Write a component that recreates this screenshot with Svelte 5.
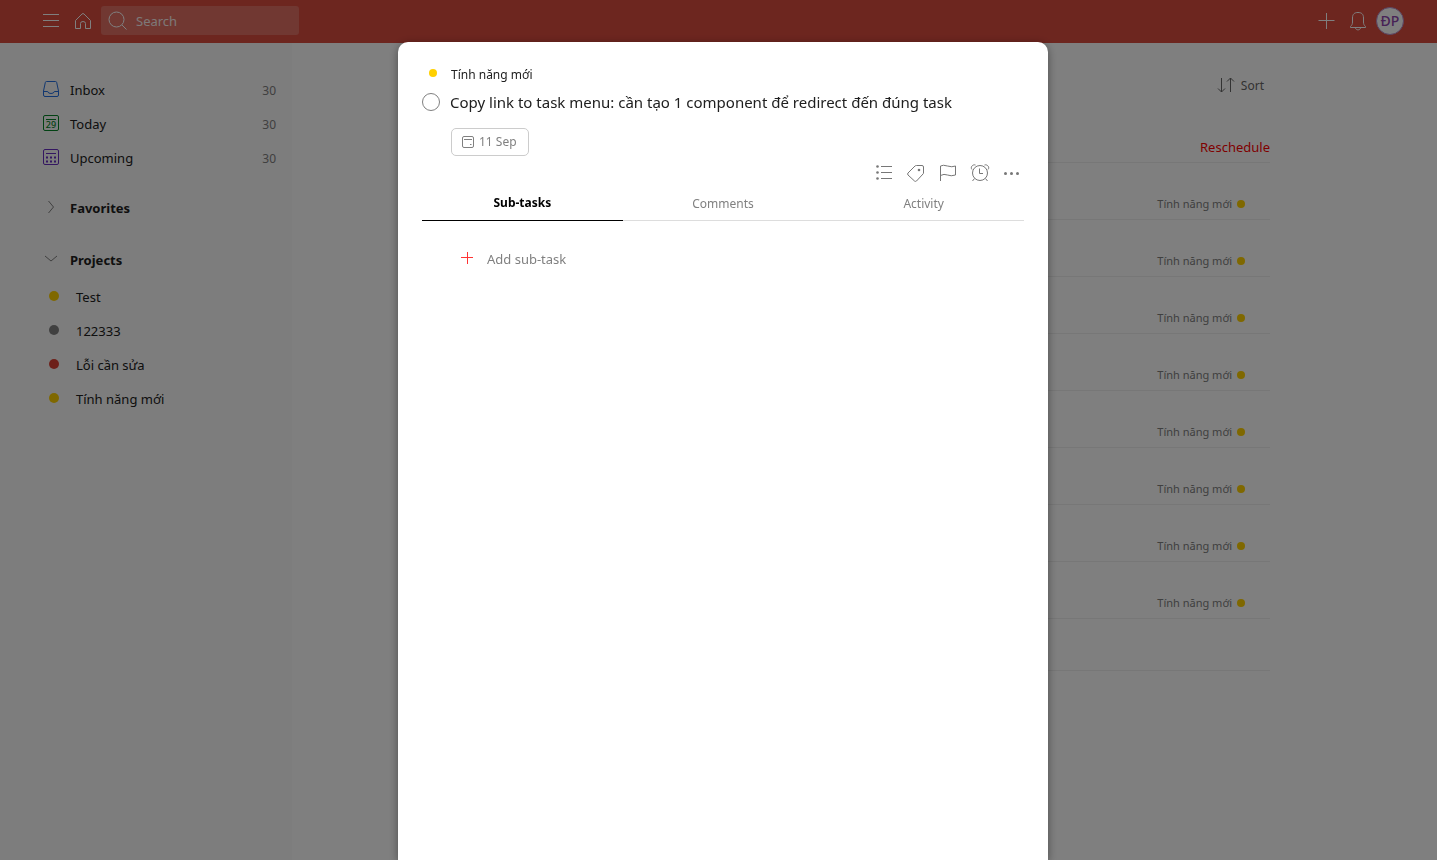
<script>
  const views = [
    { id: 'inbox', label: 'Inbox', count: 30 },
    { id: 'today', label: 'Today', count: 30 },
    { id: 'upcoming', label: 'Upcoming', count: 30 }
  ];

  const projects = [
    { name: 'Test', color: '#ffd000' },
    { name: '122333', color: '#808080' },
    { name: 'Lỗi cần sửa', color: '#db4035' },
    { name: 'Tính năng mới', color: '#ffd000' }
  ];

  const rows = Array.from({ length: 8 }, () => projects[3]);
  const tabs = ['Sub-tasks', 'Comments', 'Activity'];
  let active = $state('Sub-tasks');
</script>

<div class="app">
  <header>
    <button class="icon" aria-label="Menu">
      <svg width="16" height="16" viewBox="0 0 16 16"><path d="M0 1.500h16M0 7.500h16M0 13.500h16" /></svg>
    </button>
    <button class="icon" aria-label="Home">
      <svg width="16" height="18" viewBox="0 0 16 18"><path d="M.5 8.500 7 2q1-1 2 0l6.500 6.500v8h-5v-5q0-2-2.500-2t-2.500 2v5h-5z" /></svg>
    </button>
    <label class="search">
      <svg width="20" height="20" viewBox="0 0 20 20"><circle cx="8.500" cy="8.500" r="7.500" /><path d="m14 14 4.500 4.500" /></svg>
      <input type="text" placeholder="Search" aria-label="Search" />
    </label>
    <div class="tools">
      <button class="icon" aria-label="Add task">
        <svg width="16" height="16" viewBox="0 0 16 16"><path d="M8.500 0v16M0.500 7.500h16" /></svg>
      </button>
      <button class="icon" aria-label="Notifications">
        <svg width="16" height="20" viewBox="0 0 16 20"><path d="M.5 16.500v-1C2 14 2.500 13 2.500 11V7C2.500 3 4.500 1.500 8 1.500S13.500 3 13.500 7v4c0 2 .5 3 2 4.500v1z" /><path d="M5.500 17c.5 2.500 4.500 2.500 5 0" /></svg>
      </button>
      <button class="avatar">ĐP</button>
    </div>
  </header>

  <div class="body">
    <nav>
      <ul class="views">
        {#each views as view}
          <li>
            <a href="#{view.id}" class={view.id}>
              <svg width="16" height="18" viewBox="0 0 16 18">
                {#if view.id === 'inbox'}
                  <path d="M3.500.5h9q1 0 1.200 1l1.800 8.500v4q0 1.500-1.500 1.500H2Q.5 15.500.5 14v-4l1.800-8.500q.2-1 1.200-1z" />
                  <path d="M.5 10.500h4.200q.3 2 3.300 2t3.300-2h4.200" />
                {:else}
                  <rect x=".5" y=".5" width="15" height="15" rx="1.500" />
                  <path d="M3 4.500h10" />
                  {#if view.id === 'today'}
                    <text x="8" y="13" text-anchor="middle">29</text>
                  {:else}
                    <path class="dots" d="M3 8.500h10M3 12.500h10" />
                  {/if}
                {/if}
              </svg>
              <span>{view.label}</span>
              <small>{view.count}</small>
            </a>
          </li>
        {/each}
      </ul>

      <button class="group favorites">
        <svg width="16" height="16" viewBox="0 0 16 16"><path d="m5.500 1 5 6-5 6" /></svg>
        Favorites
      </button>
      <button class="group">
        <svg width="16" height="16" viewBox="0 0 16 16"><path d="m2 4 6 5 6-5" /></svg>
        Projects
      </button>
      <ul class="projects">
        {#each projects as project}
          <li>
            <a href="#project">
              <i class="dot" style:background={project.color}></i>
              {project.name}
            </a>
          </li>
        {/each}
      </ul>
    </nav>

    <main>
      <div class="list">
        <div class="sortbar">
          <button class="sort">
            <svg width="18" height="16" viewBox="0 0 18 16"><path d="M4.500 0v14M1 10.500 4.500 14 8 10.500M13.500 14V0M10 3.500 13.500 0 17 3.500" /></svg>
            Sort
          </button>
        </div>
        <div class="overdue"><button>Reschedule</button></div>
        <ul>
          {#each rows as project}
            <li>{project.name}<i class="dot" style:background={project.color}></i></li>
          {/each}
          <li class="blank"></li>
        </ul>
      </div>
    </main>
  </div>
</div>

<div class="overlay">
  <div class="dialog" role="dialog" aria-modal="true" aria-labelledby="task-title">
    <div class="crumb">
      <i class="dot" style:background="#ffd000"></i>
      <a href="#project">Tính năng mới</a>
    </div>
    <div class="task">
      <input type="checkbox" id="done" />
      <label for="done" id="task-title">Copy link to task menu: cần tạo 1 component để redirect đến đúng task</label>
    </div>
    <button class="due">
      <svg width="12" height="12" viewBox="0 0 12 12"><rect x=".5" y=".5" width="11" height="11" rx="1.500" /><path d="M2 3.500h8" /><path d="M8 8.500h1.500" /></svg>
      11 Sep
    </button>

    <div class="actions">
      <button class="icon" aria-label="Add sub-task">
        <svg width="24" height="24" viewBox="0 0 24 24"><path d="M9 5.500h11M9 11.500h11M9 17.500h11" /><g class="fill"><circle cx="5.500" cy="5.500" r="1.300" /><circle cx="5.500" cy="11.500" r="1.300" /><circle cx="5.500" cy="17.500" r="1.300" /></g></svg>
      </button>
      <button class="icon" aria-label="Labels">
        <svg width="24" height="24" viewBox="0 0 24 24"><path d="M12.500 4.500h5.500q1.500 0 1.500 1.500v6q0 .5-.5 1L12.500 20q-1 .8-2 0L4 14q-.8-1 0-2l7-7q.5-.5 1.500-.5z" /><circle class="fill" cx="15" cy="9" r="1.300" /></svg>
      </button>
      <button class="icon" aria-label="Priority">
        <svg width="24" height="24" viewBox="0 0 24 24"><path d="M4.500 20V5q2.500-1.500 7 0t8 0v9q-4.500 1.500-8 0t-7 .5" /></svg>
      </button>
      <button class="icon" aria-label="Reminders">
        <svg width="24" height="24" viewBox="0 0 24 24"><circle cx="12" cy="12" r="7.500" /><path d="M11.500 7.500v5H15M6.500 17.500 4.500 20M17.500 17.500l2 2.500M4 8.500C2 6.500 4.500 3 7.500 4M20 8.500C22 6.500 19.500 3 16.500 4" /></svg>
      </button>
      <button class="icon" aria-label="More actions">
        <svg width="24" height="24" viewBox="0 0 24 24"><g class="fill"><circle cx="5.500" cy="12.500" r="1.500" /><circle cx="11.500" cy="12.500" r="1.500" /><circle cx="17.500" cy="12.500" r="1.500" /></g></svg>
      </button>
    </div>

    <div class="tabs" role="tablist">
      {#each tabs as tab}
        <button role="tab" aria-selected={active === tab} class:active={active === tab} onclick={() => (active = tab)}>{tab}</button>
      {/each}
    </div>

    <button class="add">
      <svg width="12" height="14" viewBox="0 0 12 14"><path d="M6.500 0v12M0 5.500h12" /></svg>
      Add sub-task
    </button>
  </div>
</div>

<style>
  :global(body) {
    overflow: hidden;
    background: #fff;
    color: #202020;
    font: 13px/20px "Noto Sans", "Open Sans", sans-serif;
  }
  button, input { font: inherit; color: inherit; }
  button { padding: 0; border: 0; background: none; cursor: pointer; }
  a { color: inherit; text-decoration: none; }
  ul { margin: 0; padding: 0; list-style: none; }
  svg { display: block; flex: none; overflow: visible; fill: none; stroke: currentColor; }
  .fill { fill: currentColor; stroke: none; }
  .dot { width: 10px; height: 10px; border-radius: 50%; flex: none; }
  .icon { display: grid; place-items: center; width: 24px; height: 24px; }

  .app { display: flex; flex-direction: column; min-height: 100vh; }
  header {
    box-sizing: border-box;
    display: flex;
    align-items: center;
    gap: 8px;
    height: 43px;
    padding: 0 33px 2px 39px;
    background: #db4c3f;
    color: #fff;
  }
  .search {
    box-sizing: border-box;
    display: flex;
    align-items: center;
    gap: 8px;
    width: 198px;
    height: 29px;
    margin-left: -2px;
    padding-left: 7px;
    border-radius: 3px;
    background: #e27065;
  }
  .search input { width: 100%; min-width: 0; padding: 0; border: 0; background: none; outline: 0; }
  .search input::placeholder { color: #fff; opacity: 0.9; }
  .tools { display: flex; align-items: center; gap: 8px; margin-left: auto; }
  .avatar {
    box-sizing: border-box;
    width: 28px;
    height: 28px;
    margin-left: -2px;
    border: 1px solid #b58ac6;
    border-radius: 50%;
    background: #fff;
    color: #8e44ad;
    font-size: 14px;
    font-weight: 500;
    line-height: 24px;
  }

  .body { display: flex; flex: 1; }
  nav { box-sizing: border-box; flex: none; width: 292px; padding: 30px 16px 0 43px; background: #fafafa; }
  nav a { display: flex; align-items: center; height: 34px; }
  .views a { gap: 11px; }
  .views small { margin-left: auto; padding-top: 2px; color: #808080; font-size: 12px; }
  .views text { fill: currentColor; stroke: none; font-size: 9px; font-weight: 500; }
  .inbox svg { color: #246fe0; }
  .today svg { color: #058527; }
  .upcoming svg { color: #692fc2; }
  .dots { stroke-width: 2; stroke-dasharray: 2 2; }
  .group { display: flex; align-items: center; gap: 11px; height: 34px; font-weight: 700; }
  .group svg { color: #808080; }
  .favorites { margin: 16px 0 18px; }
  .projects { padding: 3px 0 0 6px; }
  .projects a { gap: 17px; }
  .projects .dot { margin-bottom: 2px; }

  main { display: flex; flex: 1; justify-content: center; min-width: 0; }
  .list { width: 100%; max-width: 811px; }
  .sortbar { display: flex; justify-content: flex-end; padding: 33px 6px 0 0; }
  .sort { display: flex; align-items: center; gap: 6px; color: #666; font-size: 12px; }
  .overdue { display: flex; justify-content: flex-end; margin-top: 41px; padding-bottom: 5px; border-bottom: 1px solid #eee; color: #f00; }
  .list li {
    box-sizing: border-box;
    display: flex;
    align-items: flex-end;
    justify-content: flex-end;
    gap: 5px;
    height: 57px;
    padding: 0 25px 5px 0;
    border-bottom: 1px solid #eee;
    color: #808080;
    font-size: 11px;
  }
  .list .dot { width: 8px; height: 8px; margin-bottom: 6px; }
  .list .blank { height: 52px; }

  .overlay {
    position: fixed;
    inset: 0;
    display: flex;
    justify-content: center;
    padding: 42px 0 0 9px;
    background: rgba(0, 0, 0, 0.5);
  }
  .dialog {
    box-sizing: border-box;
    width: 100%;
    max-width: 650px;
    padding: 23px 24px;
    border-radius: 10px 10px 0 0;
    background: #fff;
    box-shadow: 0 2px 10px rgba(0, 0, 0, 0.4);
  }
  .crumb { display: flex; align-items: center; gap: 14px; padding-left: 7px; font-size: 12px; }
  .crumb .dot { width: 8px; height: 8px; margin-bottom: 4px; }
  .task { display: flex; align-items: center; gap: 10px; margin-top: 5px; font-size: 15px; line-height: 24px; }
  .task input {
    appearance: none;
    box-sizing: border-box;
    flex: none;
    width: 18px;
    height: 18px;
    margin: 0;
    border: 1px solid #808080;
    border-radius: 50%;
  }
  .due {
    display: flex;
    align-items: center;
    gap: 5px;
    height: 28px;
    margin: 14px 0 0 29px;
    padding: 0 11px 0 10px;
    border: 1px solid #ccc;
    border-radius: 5px;
    color: #808080;
    font-size: 12px;
  }
  .actions { display: flex; justify-content: flex-end; gap: 8px; margin-top: 5px; color: #777; }
  .tabs { display: flex; margin-top: 1px; border-bottom: 1px solid #ddd; }
  .tabs button { flex: 1; height: 35px; margin-bottom: -1px; color: #808080; font-size: 12px; }
  .tabs .active { border-bottom: 1px solid #000; color: #000; font-weight: 700; }
  .add { display: flex; align-items: center; gap: 14px; margin: 28px 0 0 39px; color: #808080; }
  .add svg { color: #f33; }
</style>
